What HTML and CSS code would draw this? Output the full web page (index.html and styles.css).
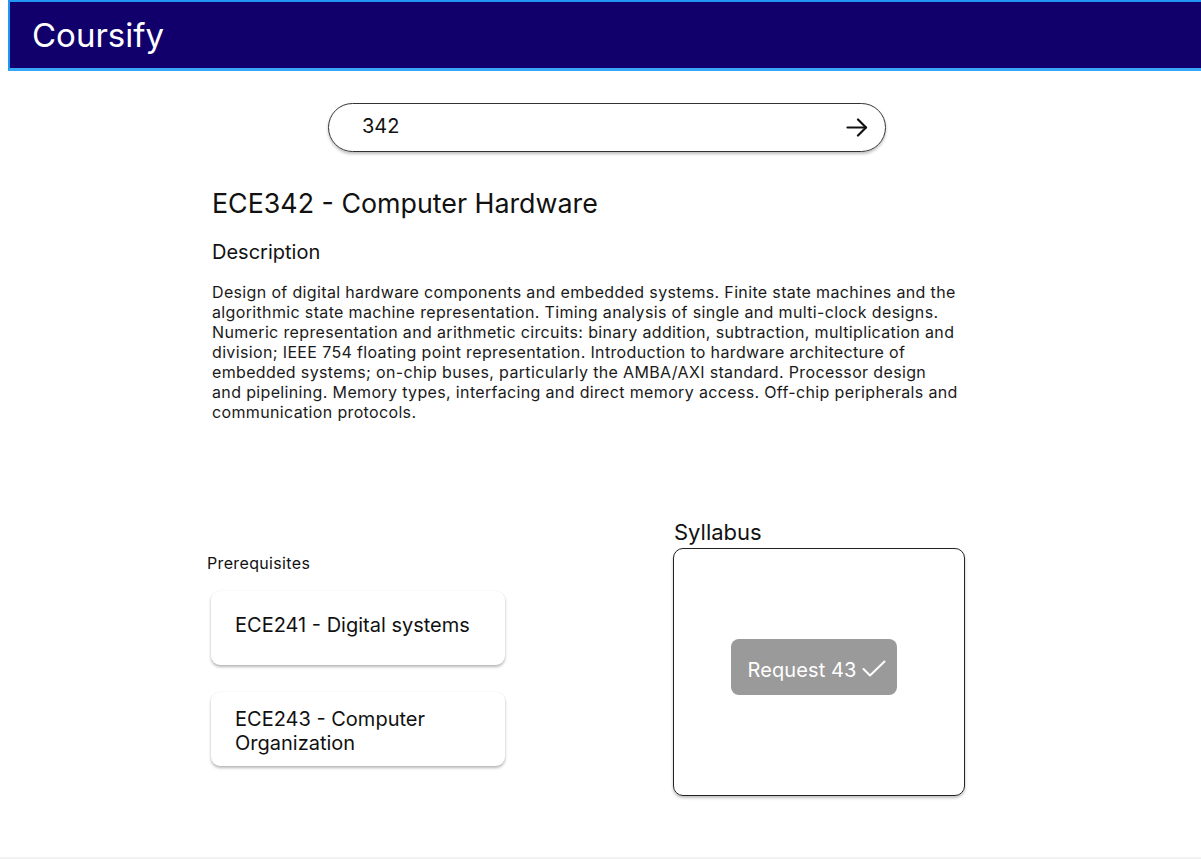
FILE: index.html
```html
<!DOCTYPE html>
<html lang="en">
<head>
<meta charset="utf-8">
<title>Coursify</title>
<link rel="stylesheet" href="styles.css">
</head>
<body>
<div class="page">
  <header class="topbar">
    <span class="brand">Coursify</span>
  </header>

  <div class="search">
    <span class="search-text">342</span>
    <svg class="search-arrow" width="22" height="19" viewBox="0 0 22 19" fill="none" stroke="#111" stroke-width="2.2" stroke-linecap="round" stroke-linejoin="round">
      <line x1="1.5" y1="9.5" x2="20" y2="9.5"/>
      <polyline points="12,1.5 20,9.5 12,17.5"/>
    </svg>
  </div>

  <main class="content">
    <h1 class="course-title">ECE342 - Computer Hardware</h1>
    <h2 class="section-title">Description</h2>
    <p class="description">Design of digital hardware components and embedded systems. Finite state machines and the algorithmic state machine representation. Timing analysis of single and multi-clock designs. Numeric representation and arithmetic circuits: binary addition, subtraction, multiplication and division; IEEE 754 floating point representation. Introduction to hardware architecture of embedded systems; on-chip buses, particularly the AMBA/AXI standard. Processor design and pipelining. Memory types, interfacing and direct memory access. Off-chip peripherals and communication protocols.</p>
  </main>

  <section class="lower">
    <div class="prereqs">
      <div class="prereq-label">Prerequisites</div>
      <div class="card"><span>ECE241 - Digital systems</span></div>
      <div class="card card-wrap"><span>ECE243 - Computer Organization</span></div>
    </div>
    <div class="syllabus">
      <div class="syllabus-label">Syllabus</div>
      <div class="syllabus-box">
        <div class="request-btn">
          <span>Request 43</span>
          <svg width="24" height="18" viewBox="0 0 24 18" fill="none" stroke="#fff" stroke-width="2" stroke-linecap="round" stroke-linejoin="round">
            <polyline points="1.5,9 8,15.5 22.5,1.5"/>
          </svg>
        </div>
      </div>
    </div>
  </section>
</div>
</body>
</html>
```

FILE: styles.css
```css
* {
  box-sizing: border-box;
}

html, body {
  margin: 0;
  padding: 0;
}

body {
  background: #f2f2f2;
  font-family: Inter, "Noto Sans", "Liberation Sans", sans-serif;
  color: #111;
}

.page {
  background: #fff;
  height: 857px;
  overflow: hidden;
}

.topbar {
  margin-left: 8px;
  height: 71px;
  background: #11006b;
  border-top: 2px solid #2196f3;
  border-left: 2px solid #2196f3;
  border-bottom: 3px solid #3aa6f8;
  display: flex;
  align-items: center;
  padding-left: 22px;
}

.brand {
  color: #fff;
  font-size: 33px;
  font-weight: 400;
}

.search {
  margin: 32px 0 0 328px;
  width: 558px;
  height: 49px;
  border: 1px solid #333;
  border-radius: 25px;
  box-shadow: 0 2px 3px rgba(0, 0, 0, 0.25);
  display: flex;
  align-items: center;
  justify-content: space-between;
  padding: 0 17px 0 33px;
}

.search-text {
  font-size: 20px;
  color: #111;
  margin-top: -3px;
}

.search-arrow {
  display: block;
}

.content {
  padding-left: 212px;
}

.course-title {
  margin: 34px 0 0;
  font-size: 26.8px;
  font-weight: 400;
  line-height: 34px;
}

.section-title {
  margin: 19px 0 0;
  font-size: 20px;
  font-weight: 400;
  line-height: 26px;
}

.description {
  margin: 17px 0 0;
  width: 746px;
  font-size: 16px;
  line-height: 20px;
  letter-spacing: 0.35px;
  color: #1a1a1a;
}

.lower {
  display: flex;
  margin: 96px 0 0 207px;
  align-items: flex-start;
}

.prereqs {
  width: 466px;
  padding-top: 35px;
}

.prereq-label {
  font-size: 16px;
  line-height: 20px;
  letter-spacing: 0.35px;
  margin-bottom: 18px;
}

.card {
  margin-left: 4px;
  width: 294px;
  height: 74px;
  border-radius: 9px;
  background: #fff;
  box-shadow: 0 2px 3px rgba(0, 0, 0, 0.28), 0 0 2px rgba(0, 0, 0, 0.06);
  display: flex;
  align-items: center;
  padding: 0 30px 0 24px;
  font-size: 20px;
  line-height: 24px;
  margin-bottom: 27px;
}

.card span {
  display: block;
  margin-top: -6px;
}

.card-wrap span {
  margin-top: 4px;
}

.syllabus-label {
  font-size: 22px;
  line-height: 28px;
  margin-left: 1px;
  margin-bottom: 2px;
}

.syllabus-box {
  width: 292px;
  height: 248px;
  border: 1px solid #222;
  border-radius: 10px;
  box-shadow: 0 2px 3px rgba(0, 0, 0, 0.25);
  display: flex;
  align-items: center;
  justify-content: center;
  padding: 0 10px 10px 0;
}

.request-btn {
  width: 166px;
  height: 56px;
  background: #9a9a9a;
  border-radius: 8px;
  color: #fff;
  font-size: 20px;
  letter-spacing: 0.1px;
  display: flex;
  align-items: center;
  justify-content: center;
  gap: 6px;
  padding: 5px 0 0 6px;
}

.request-btn svg {
  display: block;
  margin-top: -1px;
}
```
